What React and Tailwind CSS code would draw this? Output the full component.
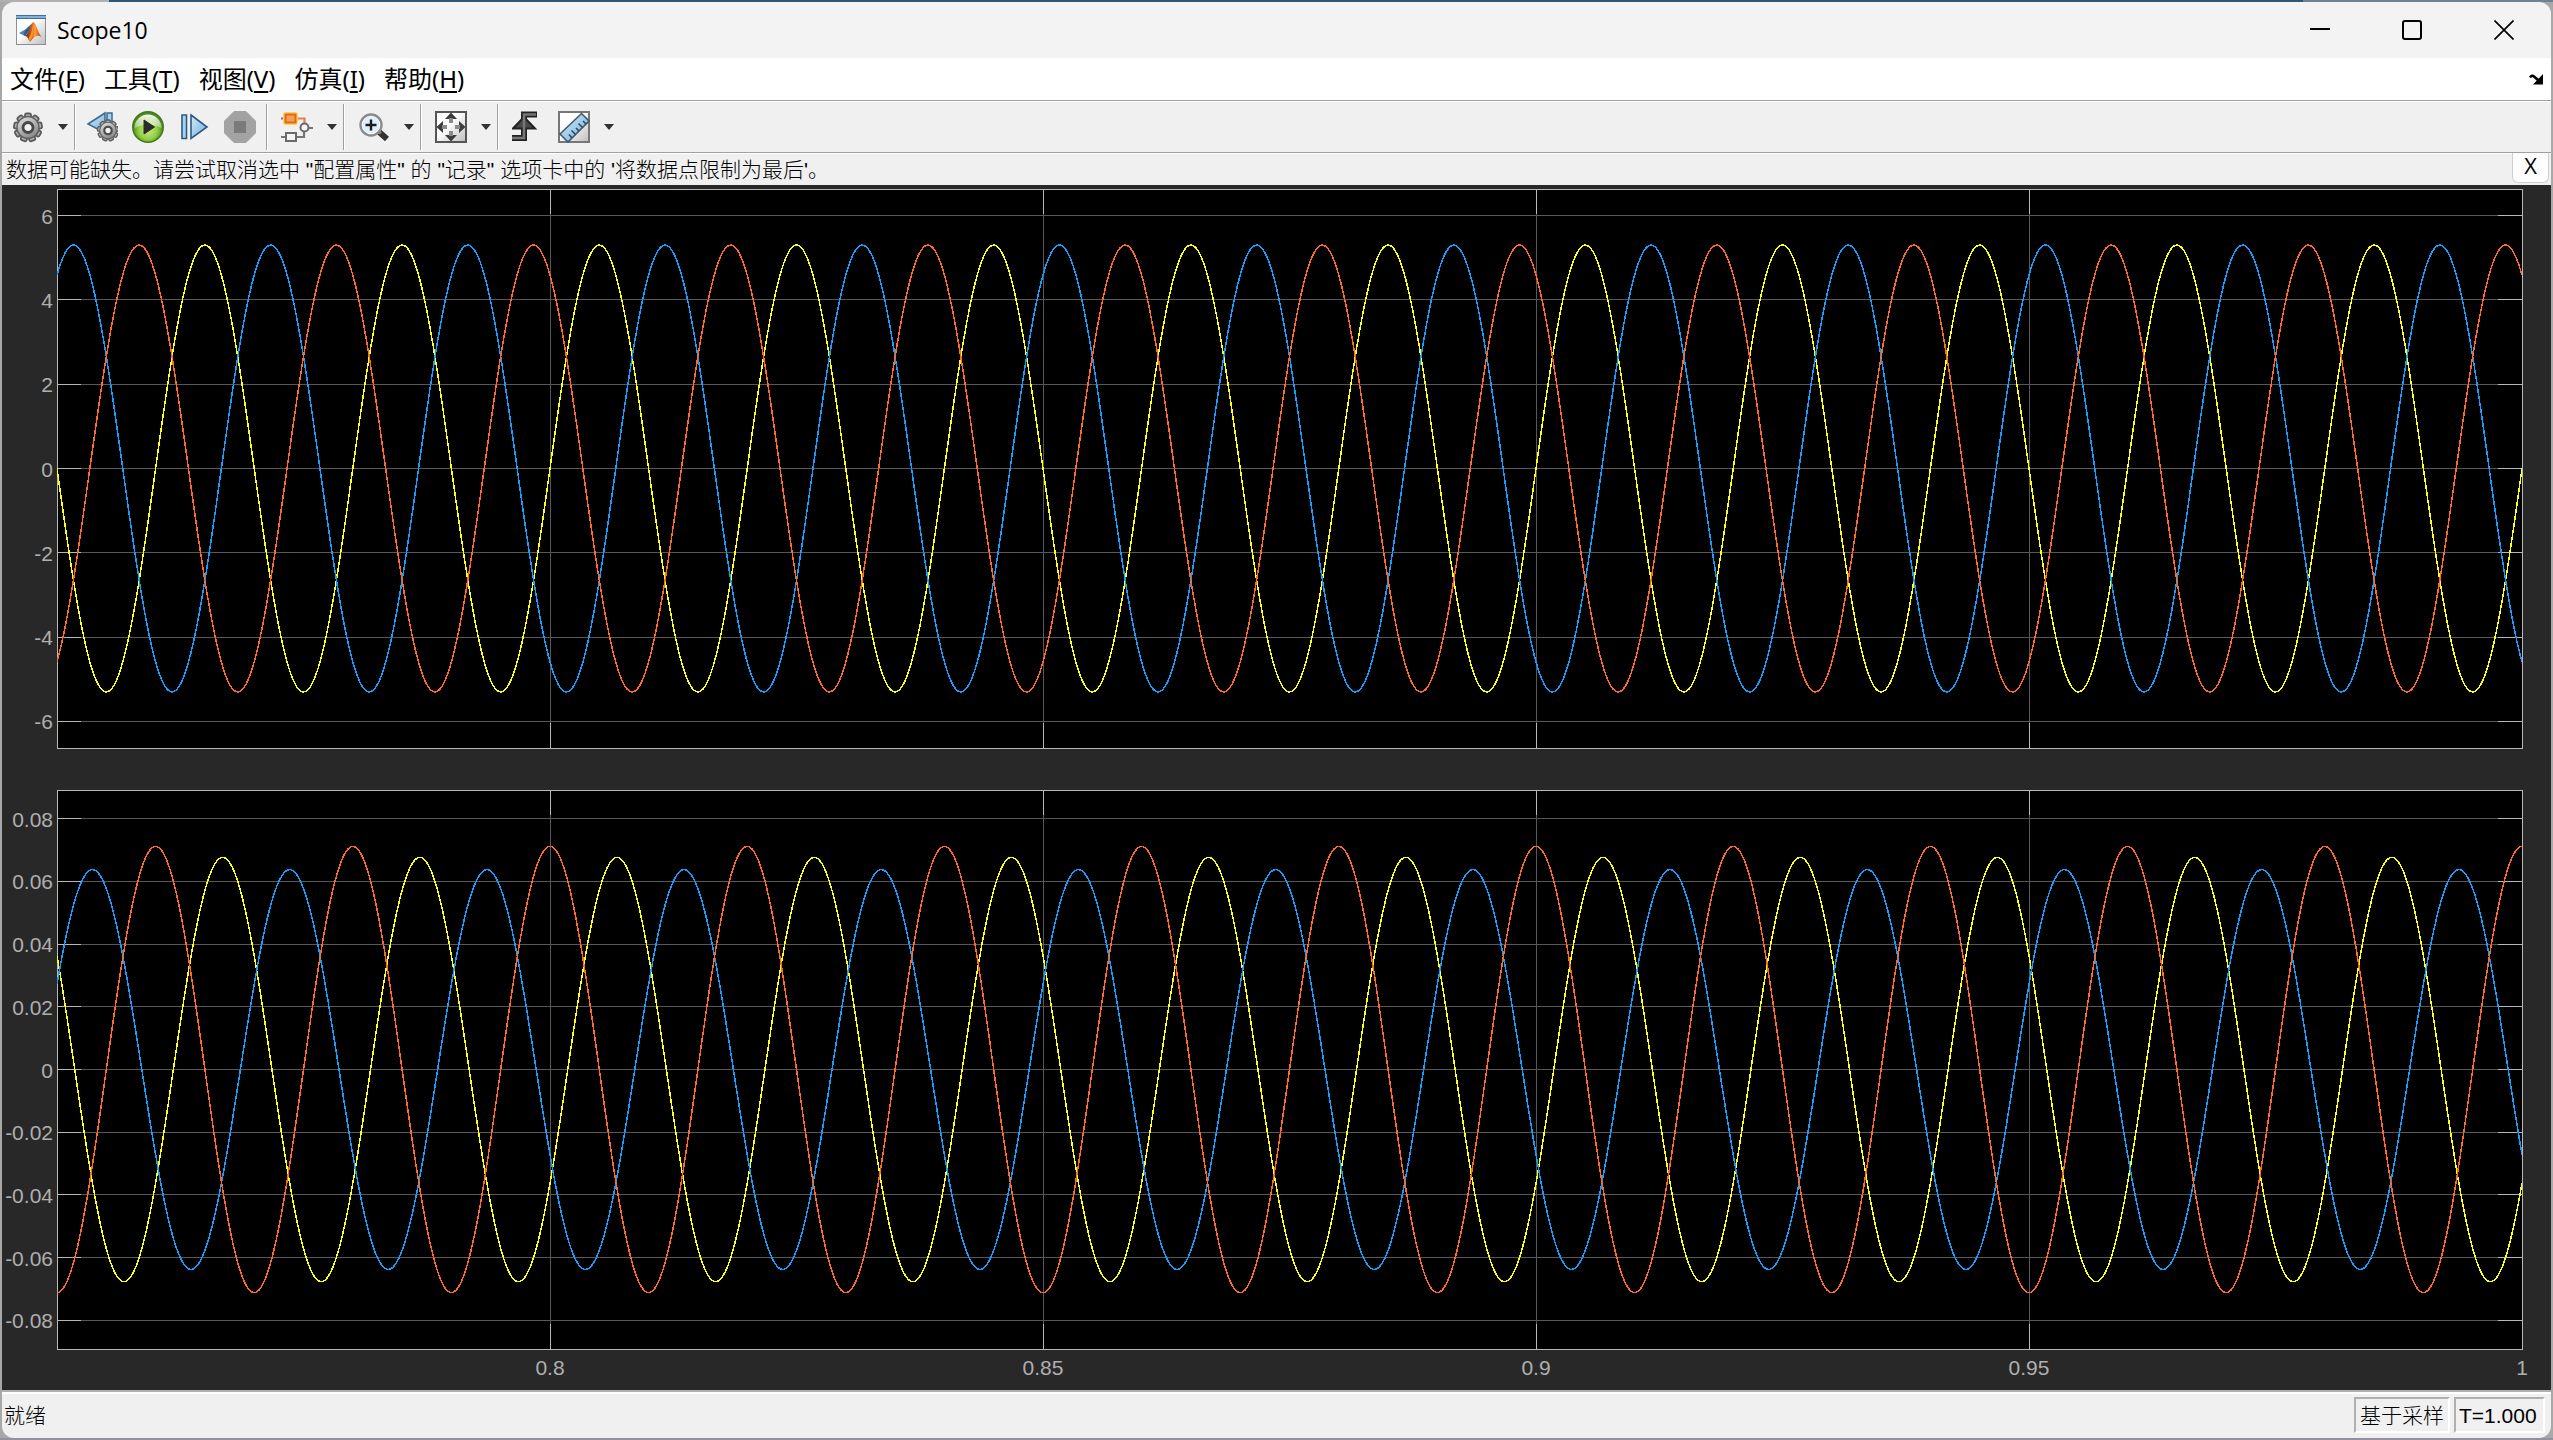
const T_START = 0.75;
const T_END = 1;
const PERIOD = 0.02;

const COLORS = { yellow: "#ffff11", blue: "#139fff", orange: "#ff6929" };

const menus = [
  { label: "文件", key: "F" },
  { label: "工具", key: "T" },
  { label: "视图", key: "V" },
  { label: "仿真", key: "I" },
  { label: "帮助", key: "H" },
];

const xTicks = [0.8, 0.85, 0.9, 0.95, 1];

// peak = time of the first maximum after T_START
const currentPlot = {
  name: "三相电流",
  limit: 6.63,
  ticks: [6, 4, 2, 0, -2, -4, -6],
  signals: [
    { color: COLORS.yellow, amp: 5.3, peak: 0.015 },
    { color: COLORS.blue, amp: 5.3, peak: 0.00167 },
    { color: COLORS.orange, amp: 5.3, peak: 0.00833 },
  ],
};

const fluxPlot = {
  name: "三相磁链",
  limit: 0.0892,
  ticks: [0.08, 0.06, 0.04, 0.02, 0, -0.02, -0.04, -0.06, -0.08],
  signals: [
    { color: COLORS.yellow, amp: 0.0677, peak: 0.0168 },
    { color: COLORS.blue, amp: 0.0638, peak: 0.0036 },
    { color: COLORS.orange, amp: 0.0712, peak: 0.01 },
  ],
};

function wavePath({ amp, peak }, limit) {
  const steps = 1500;
  const points = [];
  for (let i = 0; i <= steps; i++) {
    const t = ((T_END - T_START) * i) / steps;
    const y = amp * Math.cos((2 * Math.PI * (t - peak)) / PERIOD);
    points.push(`${((i / steps) * 1000).toFixed(2)} ${(500 - (y / limit) * 500).toFixed(2)}`);
  }
  return "M" + points.join("L");
}

function Plot({ plot, showTime }) {
  const yPos = (v) => `${50 - (v / plot.limit) * 50}%`;
  const xPos = (t) => `${((t - T_START) / (T_END - T_START)) * 100}%`;

  return (
    <div className="flex-1 min-h-0">
      <svg role="img" aria-label={plot.name} className="block w-full h-full overflow-visible">
        <rect width="100%" height="100%" fill="#000" />
        <g stroke="#585858" shapeRendering="crispEdges">
          {plot.ticks.map((v) => (
            <line key={v} x1="0" x2="100%" y1={yPos(v)} y2={yPos(v)} />
          ))}
          {xTicks.map((t) => (
            <line key={t} y1="0" y2="100%" x1={xPos(t)} x2={xPos(t)} />
          ))}
        </g>
        <g stroke="#b8b8b8" shapeRendering="crispEdges">
          {plot.ticks.map((v) => (
            <g key={v}>
              <line x1="0" x2="24" y1={yPos(v)} y2={yPos(v)} />
              <svg x="100%" overflow="visible">
                <line x1="-24" x2="0" y1={yPos(v)} y2={yPos(v)} />
              </svg>
            </g>
          ))}
          {xTicks.map((t) => (
            <g key={t}>
              <line y1="0" y2="25" x1={xPos(t)} x2={xPos(t)} />
              <svg y="100%" overflow="visible">
                <line y1="-25" y2="0" x1={xPos(t)} x2={xPos(t)} />
              </svg>
            </g>
          ))}
          <rect width="100%" height="100%" fill="none" />
        </g>
        <svg width="100%" height="100%" viewBox="0 0 1000 1000" preserveAspectRatio="none">
          {plot.signals.map((s) => (
            <path
              key={s.color}
              d={wavePath(s, plot.limit)}
              fill="none"
              stroke={s.color}
              strokeWidth="1.5"
              shapeRendering="crispEdges"
              vectorEffect="non-scaling-stroke"
            />
          ))}
        </svg>
        <g fill="#afafaf" className="text-[21px]">
          {plot.ticks.map((v) => (
            <text key={v} x="-4" y={yPos(v)} dy="8" textAnchor="end">
              {v}
            </text>
          ))}
          {showTime &&
            xTicks.map((t) => (
              <text key={t} x={xPos(t)} y="100%" dy="26" textAnchor="middle">
                {t}
              </text>
            ))}
        </g>
      </svg>
    </div>
  );
}

function ToolButton({ label, children }) {
  return (
    <button type="button" aria-label={label} title={label} className="size-8 shrink-0">
      <svg viewBox="0 0 32 32" className="block size-8">
        {children}
      </svg>
    </button>
  );
}

function DropArrow({ label }) {
  return (
    <button type="button" aria-label={label} className="w-4 h-8 ml-[11px] mr-[3px] flex items-center justify-center">
      <svg viewBox="0 0 10 6" className="w-[10px] h-[6px]">
        <path d="M0 0H10L5 6Z" fill="#333" />
      </svg>
    </button>
  );
}

function Separator() {
  return <div className="w-[2px] h-[46px] bg-[#a0a0a0] border-r border-white" />;
}

function Gear({ cx, cy, r }) {
  return (
    <g transform={`translate(${cx} ${cy}) scale(${r / 14})`}>
      {[0, 40, 80, 120, 160, 200, 240, 280, 320].map((a) => (
        <rect
          key={a}
          x="-3"
          y="-14"
          width="6"
          height="6"
          rx="1.5"
          fill="#b4b4b4"
          stroke="#5c5c5c"
          strokeWidth="1.8"
          transform={`rotate(${a})`}
        />
      ))}
      <circle r="11" fill="url(#metal)" stroke="#606060" strokeWidth="1.4" />
      <circle r="5" fill="#f2f2f2" stroke="#484848" strokeWidth="2.8" />
    </g>
  );
}

function SharedGradients() {
  return (
    <svg className="absolute size-0" aria-hidden="true">
      <defs>
        <linearGradient id="metal" x1="0" y1="0" x2="0.6" y2="1">
          <stop offset="0" stopColor="#e4e4e4" />
          <stop offset="1" stopColor="#8a8a8a" />
        </linearGradient>
        <linearGradient id="sky" x1="0" y1="0" x2="1" y2="1">
          <stop offset="0" stopColor="#d5ebf9" />
          <stop offset="1" stopColor="#6fafdc" />
        </linearGradient>
        <linearGradient id="paper" x1="0" y1="0" x2="1" y2="1">
          <stop offset="0.4" stopColor="#fff" />
          <stop offset="1" stopColor="#bdbdbd" />
        </linearGradient>
        <radialGradient id="green" cx="0.5" cy="0.6" r="0.5">
          <stop offset="0" stopColor="#c6ea8a" />
          <stop offset="0.6" stopColor="#94d044" />
          <stop offset="1" stopColor="#4d8a1c" />
        </radialGradient>
        <linearGradient id="shine" x1="0" y1="0" x2="0" y2="1">
          <stop offset="0" stopColor="#fff" stopOpacity="0.95" />
          <stop offset="1" stopColor="#fff" stopOpacity="0.35" />
        </linearGradient>
        <linearGradient id="flame" x1="0" y1="0" x2="1" y2="0">
          <stop offset="0" stopColor="#6b1f12" />
          <stop offset="0.45" stopColor="#e8641b" />
          <stop offset="0.6" stopColor="#f9a53a" />
          <stop offset="1" stopColor="#b32d15" />
        </linearGradient>
      </defs>
    </svg>
  );
}

function TitleBar() {
  return (
    <header className="h-14 shrink-0 bg-[#f3f3f3] flex items-center pl-[14px] pr-px">
      <svg viewBox="0 0 30 30" className="size-[30px]" aria-hidden="true">
        <rect x="0.5" y="0.5" width="29" height="29" fill="url(#paper)" stroke="#8a8f94" />
        <rect width="30" height="4" fill="#7fb0dc" />
        <path d="M0 .5H30M0 3.5H30" stroke="#3f6f9c" />
        <path d="M3 18L10 14L13 16L9 21Z" fill="#3f86c0" />
        <path d="M10 14L16.5 8L13 16L9 21L7.5 19.5Z" fill="#2c5f93" />
        <path d="M9 21C13 19 14.5 8 17.5 7C20 8 21.5 17 25.5 22C22 19.500 20 21 18 22.500C16 24 15 27 13.500 26.500C12.500 25 12 21.500 9 21Z" fill="url(#flame)" />
        <path d="M17.500 7C16.500 14 15 20 12.500 23.500L13.500 26.500C17 24 18 15 17.500 7Z" fill="#f2952b" />
      </svg>
      <h1 className="ml-[11px] text-[23px] text-black font-['Open_Sans','Noto_Sans',sans-serif]">Scope10</h1>
      <div className="ml-auto h-full flex">
        <button type="button" aria-label="最小化" className="w-[92px] h-full flex items-center justify-center">
          <svg viewBox="0 0 20 20" className="size-5" fill="none" stroke="#000" strokeWidth="2">
            <path d="M0 9H20" />
          </svg>
        </button>
        <button type="button" aria-label="最大化" className="w-[92px] h-full flex items-center justify-center">
          <svg viewBox="0 0 20 20" className="size-5" fill="none" stroke="#000" strokeWidth="2">
            <rect x="1" y="1" width="18" height="18" rx="2" />
          </svg>
        </button>
        <button type="button" aria-label="关闭" className="w-[92px] h-full flex items-center justify-center">
          <svg viewBox="0 0 20 20" className="size-5" fill="none" stroke="#000" strokeWidth="1.7">
            <path d="M.5 .5L19.500 19.500M19.500 .5L.5 19.500" />
          </svg>
        </button>
      </div>
    </header>
  );
}

function MenuBar() {
  return (
    <nav className="h-[42px] shrink-0 bg-white flex items-center gap-[19px] pl-2 pr-2 text-black text-[24px] font-['Noto_Sans','Noto_Sans_CJK_SC',sans-serif]">
      {menus.map((m) => (
        <button type="button" key={m.key} className="leading-none whitespace-nowrap">
          {m.label}(<span className="underline underline-offset-3">{m.key}</span>)
        </button>
      ))}
      <button type="button" aria-label="停靠" className="ml-auto">
        <svg viewBox="0 0 14 11" className="w-[14px] h-[11px]">
          <path d="M1 3.500Q3 .5 5 2.500L9 6" fill="none" stroke="#000" strokeWidth="2.600" />
          <path d="M14 0V10.500H4Z" fill="#000" />
        </svg>
      </button>
    </nav>
  );
}

function Toolbar() {
  return (
    <div
      role="toolbar"
      aria-label="工具栏"
      className="h-[52px] shrink-0 bg-[#f0f0f0] border-t border-[#a0a0a0] shadow-[inset_0_1px_0_#fff] flex items-center pl-[10px]"
    >
      <ToolButton label="配置属性">
        <Gear cx={16} cy={16.5} r={14} />
      </ToolButton>
      <DropArrow label="配置选项" />
      <Separator />
      <div className="flex gap-[14px] pl-[10px] pr-[10px]">
        <ToolButton label="步退选项">
          <path d="M2 13L19 2V22Z" fill="url(#sky)" stroke="#3b6a92" strokeWidth="1.5" />
          <path d="M21 2H26V20H21Z" fill="#a9d2ee" stroke="#3b6a92" strokeWidth="1.5" />
          <Gear cx={22} cy={19.5} r={10.5} />
        </ToolButton>
        <ToolButton label="运行">
          <circle cx="16" cy="16" r="15.200" fill="url(#green)" stroke="#447a1c" strokeWidth="1.600" />
          <path d="M2.500 17A13.500 13.500 0 0 1 29.500 17Q16 10 2.500 17Z" fill="url(#shine)" />
          <path d="M12 9L22.500 16L12 23Z" fill="#2b2b2b" stroke="#2b2b2b" />
        </ToolButton>
        <ToolButton label="步进">
          <path d="M4 4H8.500V27.500H4Z" fill="#a9d2ee" stroke="#2d5a82" strokeWidth="1.600" />
          <path d="M13 4L29 16L13 27.500Z" fill="url(#sky)" stroke="#2d5a82" strokeWidth="1.600" />
        </ToolButton>
        <ToolButton label="停止">
          <path d="M10 .5H22L31.500 10V22L22 31.500H10L.5 22V10Z" fill="#a2a2a2" stroke="#a2a2a2" strokeLinejoin="round" />
          <rect x="10" y="10" width="12" height="12" fill="#7b7b7b" />
        </ToolButton>
      </div>
      <Separator />
      <div className="flex pl-[13px]">
        <ToolButton label="突出显示模块">
          <path d="M0 7.500H4M27 17H32M0 26H4M16 26H23V21" fill="none" stroke="#757575" strokeWidth="2.200" />
          <path d="M16 7.500H23.500V12" fill="none" stroke="#e0814b" strokeWidth="2.200" />
          <rect x="2" y="1" width="15" height="13" rx="3" fill="#ffcf5e" />
          <rect x="4.500" y="3.500" width="10" height="8" fill="#f6a055" stroke="#dd6a1c" strokeWidth="2" />
          <rect x="5" y="22" width="10" height="8" fill="#f5f5f5" stroke="#6a6a6a" strokeWidth="2" />
          <circle cx="23.500" cy="16.500" r="4" fill="#f5f5f5" stroke="#6a6a6a" strokeWidth="2" />
        </ToolButton>
      </div>
      <DropArrow label="模块选项" />
      <Separator />
      <div className="flex pl-[13px]">
        <ToolButton label="放大">
          <path d="M20 20L29 28" stroke="#333" strokeWidth="6" />
          <path d="M19 19L23 22.500" stroke="#777" strokeWidth="3" />
          <circle cx="13" cy="14" r="10.500" fill="#fff" stroke="#8b8b8b" strokeWidth="2.400" />
          <circle cx="13" cy="14" r="8.500" fill="#dff0f8" />
          <path d="M13 8.500V19.500M7.500 14H18.500" stroke="#1c1c1c" strokeWidth="2.400" />
        </ToolButton>
      </div>
      <DropArrow label="缩放选项" />
      <Separator />
      <div className="flex pl-[13px]">
        <ToolButton label="缩放坐标区范围">
          <rect x="1" y="1" width="30" height="30" fill="url(#paper)" stroke="#555" strokeWidth="2" />
          <path d="M16 1.500L22 8H10ZM16 30.500L22 24H10ZM1.500 16L8 10V22ZM30.500 16L24 10V22Z" fill="#3c3c3c" />
          <path d="M16 7V12M16 20V25M7 16H12M20 16H25" stroke="#8a8a8a" strokeWidth="4" />
        </ToolButton>
      </div>
      <DropArrow label="范围选项" />
      <Separator />
      <div className="flex gap-[14px] pl-[13px]">
        <ToolButton label="触发器">
          <path d="M25 3.500H12V27H-1" fill="none" stroke="#222" strokeWidth="6" />
          <path d="M12 6L23 17.500H1Z" fill="#4a4a4a" stroke="#222" strokeWidth="2" />
          <path d="M24 3.500H12V27H0" fill="none" stroke="#777" strokeWidth="2.600" />
        </ToolButton>
        <ToolButton label="光标测量">
          <rect x="1" y="1" width="30" height="30" fill="url(#paper)" stroke="#777" strokeWidth="2" />
          <path d="M2 23L23.500 2.500L31 10L10 31Z" fill="url(#sky)" stroke="#3f5a6e" strokeWidth="1.600" />
          <path d="M14 27L11 23.500M17.500 23.500L13.500 19.500M21 20L18 17M24.500 16.500L20.500 12.500M28 13L25 10" stroke="#2f4a5e" strokeWidth="1.600" />
        </ToolButton>
      </div>
      <DropArrow label="测量选项" />
    </div>
  );
}

function MessageBar() {
  return (
    <div className="h-[33px] shrink-0 bg-[#f0f0f0] border-t border-[#a0a0a0] shadow-[inset_0_1px_0_#fff] flex items-center justify-between pl-1 pr-[2px] text-black">
      <p className="text-[21px] leading-none font-light whitespace-nowrap">
        数据可能缺失。请尝试取消选中 "配置属性" 的 "记录" 选项卡中的 '将数据点限制为最后'。
      </p>
      <button
        type="button"
        aria-label="关闭消息"
        className="w-[37px] h-[30px] self-start bg-[#fdfdfd] border border-t-0 border-[#d0d0d0] rounded-b-md text-[22px] leading-none pb-[5px] font-['Open_Sans',sans-serif]"
      >
        X
      </button>
    </div>
  );
}

function StatusBar() {
  const cell =
    "h-9 flex items-center border-2 border-t-[#b0b0b0] border-l-[#b0b0b0] border-b-white border-r-white whitespace-nowrap";
  return (
    <footer className="h-12 shrink-0 bg-[#f0f0f0] border-t-2 border-[#b0b0b0] shadow-[inset_0_2px_0_#fff] flex items-center pl-[2px] pr-[6px] text-[21px] leading-none text-black">
      <span className="font-light">就绪</span>
      <div className="ml-auto flex gap-1">
        <div className={`${cell} w-24 pl-1 font-light`}>基于采样</div>
        <div className={`${cell} w-[91px] pl-[3px]`}>T=1.000</div>
      </div>
    </footer>
  );
}

export default function App() {
  return (
    <div className="relative h-screen flex flex-col bg-[#a8a8a8] font-['Liberation_Sans','Noto_Sans_CJK_SC',sans-serif]">
      <SharedGradients />
      {/* sliver of the desktop above the window */}
      <div className="h-[2px] shrink-0 flex">
        <div className="w-[109px] bg-[#b0b0b0]" />
        <div className="flex-1 bg-[#2f5575]" />
        <div className="w-[250px] bg-[#6d8294]" />
      </div>
      <div className="flex-1 min-h-0 flex flex-col mx-[2px] rounded-xl overflow-hidden">
        <TitleBar />
        <MenuBar />
        <Toolbar />
        <MessageBar />
        <main className="flex-1 min-h-0 bg-[#282828] flex flex-col gap-[42px] pt-1 pb-[41px] pl-[55px] pr-[29px]">
          <Plot plot={currentPlot} />
          <Plot plot={fluxPlot} showTime />
        </main>
        <StatusBar />
      </div>
      <div className="h-[2px] shrink-0 bg-[#9590a0]" />
    </div>
  );
}
